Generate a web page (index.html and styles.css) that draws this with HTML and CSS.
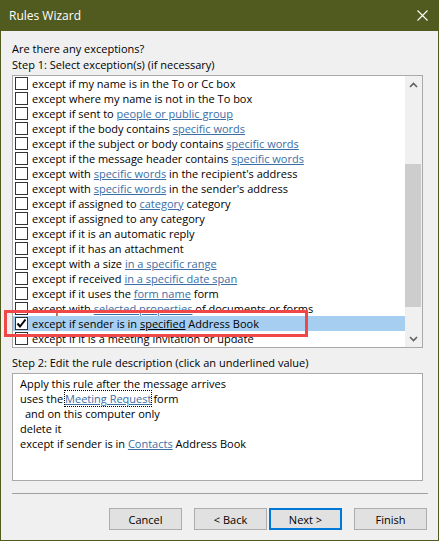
FILE: index.html
```html
<!DOCTYPE html>
<html lang="en">
<head>
    <meta charset="UTF-8">
    <title>Rules Wizard</title>
    <link rel="stylesheet" href="styles.css">
</head>
<body>

    <div class="window">
        <div class="titlebar">
            <span class="title">Rules Wizard</span>
            <svg class="close" width="11" height="11" viewBox="0 0 11 11">
                <path d="M0.5 0.5 L10.5 10.5 M10.5 0.5 L0.5 10.5" stroke="#ffffff" stroke-width="1.1" fill="none"/>
            </svg>
        </div>

        <div class="content">
            <div class="label first">Are there any exceptions?</div>
            <div class="label">Step 1: Select exception(s) (if necessary)</div>

            <!-- Exception list -->
            <div class="listbox">
                <div class="rows">
                    <div class="row"><span class="check"></span><span>except if my name is in the To or Cc box</span></div>
                    <div class="row"><span class="check"></span><span>except where my name is not in the To box</span></div>
                    <div class="row"><span class="check"></span><span>except if sent to <a class="link">people or public group</a></span></div>
                    <div class="row"><span class="check"></span><span>except if the body contains <a class="link">specific words</a></span></div>
                    <div class="row"><span class="check"></span><span>except if the subject or body contains <a class="link">specific words</a></span></div>
                    <div class="row"><span class="check"></span><span>except if the message header contains <a class="link">specific words</a></span></div>
                    <div class="row"><span class="check"></span><span>except with <a class="link">specific words</a> in the recipient's address</span></div>
                    <div class="row"><span class="check"></span><span>except with <a class="link">specific words</a> in the sender's address</span></div>
                    <div class="row"><span class="check"></span><span>except if assigned to <a class="link">category</a> category</span></div>
                    <div class="row"><span class="check"></span><span>except if assigned to any category</span></div>
                    <div class="row"><span class="check"></span><span>except if it is an automatic reply</span></div>
                    <div class="row"><span class="check"></span><span>except if it has an attachment</span></div>
                    <div class="row"><span class="check"></span><span>except with a size <a class="link">in a specific range</a></span></div>
                    <div class="row"><span class="check"></span><span>except if received <a class="link">in a specific date span</a></span></div>
                    <div class="row"><span class="check"></span><span>except if it uses the <a class="link">form name</a> form</span></div>
                    <div class="row"><span class="check"></span><span>except with <a class="link">selected properties</a> of documents or forms</span></div>
                    <div class="row selected">
                        <span class="check checked">
                            <svg width="11" height="11" viewBox="0 0 11 11">
                                <path d="M1.5 5.5 L4 8.5 L9.5 1.5" stroke="#000000" stroke-width="2" fill="none"/>
                            </svg>
                        </span>
                        <span>except if sender is in <a class="link">specified</a> Address Book</span>
                    </div>
                    <div class="row"><span class="check"></span><span>except if it is a meeting invitation or update</span></div>
                </div>

                <div class="scrollbar">
                    <div class="arrow">
                        <svg width="9" height="6" viewBox="0 0 9 6">
                            <path d="M1 5 L4.5 1.5 L8 5" stroke="#606060" stroke-width="1.6" fill="none"/>
                        </svg>
                    </div>
                    <div class="track"><div class="thumb"></div></div>
                    <div class="arrow">
                        <svg width="9" height="6" viewBox="0 0 9 6">
                            <path d="M1 1 L4.5 4.5 L8 1" stroke="#606060" stroke-width="1.6" fill="none"/>
                        </svg>
                    </div>
                </div>
            </div>

            <div class="label step2">Step 2: Edit the rule description (click an underlined value)</div>

            <!-- Rule description -->
            <div class="desc">
                <div>Apply this rule after the message arrives</div>
                <div>uses the<a class="link focused">Meeting Request</a>form</div>
                <div class="indent">and on this computer only</div>
                <div>delete it</div>
                <div>except if sender is in <a class="link">Contacts</a> Address Book</div>
            </div>

            <div class="separator"></div>

            <div class="buttons">
                <div class="button">Cancel</div>
                <div class="button back">&lt; Back</div>
                <div class="button default">Next &gt;</div>
                <div class="button finish">Finish</div>
            </div>
        </div>

        <!-- annotation box -->
        <div class="callout"></div>
    </div>

</body>
</html>
```

FILE: styles.css
```css
body {
    margin: 0;
    padding: 0;
    background-color: #f0f0f0;
    font-family: 'Open Sans', 'Noto Sans', sans-serif;
    font-size: 11px;
    color: #000000;
}

.window {
    position: relative;
    width: 439px;
    height: 541px;
    box-sizing: border-box;
    background-color: #f0f0f0;
    border: 1px solid #525b1f;
    border-top: none;
    overflow: hidden;
}

.titlebar {
    height: 31px;
    margin: 0 -1px;
    background-color: #525b1f;
    display: flex;
    align-items: center;
    justify-content: space-between;
    padding: 0 11px 0 9px;
}

.titlebar .title {
    color: #ffffff;
    font-size: 12px;
}

.close {
    display: block;
}

.content {
    padding: 10px 11px 0 11px;
}

.label {
    line-height: 16px;
    white-space: nowrap;
}

.label.step2 {
    margin-top: 7px;
    margin-bottom: 2px;
}

.listbox {
    margin-top: 2px;
    width: 411px;
    height: 273px;
    box-sizing: border-box;
    border: 1px solid #a9a9a9;
    background-color: #ffffff;
    display: flex;
    overflow: hidden;
}

.rows {
    flex: 1;
    overflow: hidden;
}

.row {
    height: 15px;
    display: flex;
    align-items: center;
    white-space: nowrap;
}

.row.selected {
    background-color: #a6cef0;
}

.check {
    width: 13px;
    height: 13px;
    box-sizing: border-box;
    border: 1px solid #333333;
    background-color: #ffffff;
    margin: 0 4px 0 2px;
    flex-shrink: 0;
    display: flex;
    align-items: center;
    justify-content: center;
}

.link {
    color: #3b6ea5;
    text-decoration: underline;
}

.row.selected .link {
    color: #000000;
}

.scrollbar {
    width: 17px;
    background-color: #f0f0f0;
    display: flex;
    flex-direction: column;
}

.arrow {
    height: 17px;
    display: flex;
    align-items: center;
    justify-content: center;
}

.track {
    flex: 1;
}

.thumb {
    margin-top: 71px;
    width: 16px;
    height: 143px;
    background-color: #cdcdcd;
}

.desc {
    height: 108px;
    box-sizing: border-box;
    width: 411px;
    border: 1px solid #a9a9a9;
    background-color: #ffffff;
    padding: 2px 7px;
    line-height: 15px;
    white-space: nowrap;
}

.desc .indent {
    padding-left: 5px;
}

.link.focused {
    outline: 1px dotted #000000;
    outline-offset: 0;
    margin: 0 2px 0 2px;
}

.separator {
    margin-top: 12px;
    width: 416px;
    height: 1px;
    background-color: #a0a0a0;
}

.buttons {
    margin-top: 14px;
    display: flex;
    justify-content: flex-end;
}

.button {
    width: 73px;
    height: 22px;
    box-sizing: border-box;
    border: 1px solid #adadad;
    background-color: #e1e1e1;
    display: flex;
    align-items: center;
    justify-content: center;
}

.button.back {
    margin-left: 12px;
}

.button.default {
    margin-left: 2px;
    border: 2px solid #0078d7;
}

.button.finish {
    margin-left: 12px;
}

.callout {
    position: absolute;
    left: 3px;
    top: 310px;
    width: 304px;
    height: 27px;
    box-sizing: border-box;
    border: 3px solid #f04848;
}
```
